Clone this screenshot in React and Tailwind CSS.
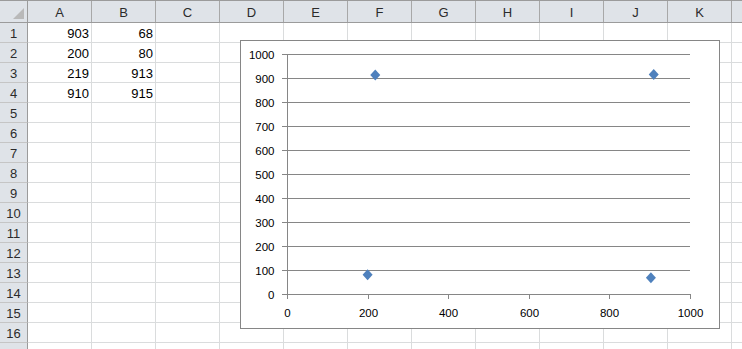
import React from "react";

const cols = ["A", "B", "C", "D", "E", "F", "G", "H", "I", "J", "K", ""];
const data = {
  1: ["903", "68"],
  2: ["200", "80"],
  3: ["219", "913"],
  4: ["910", "915"],
};
const rows = Array.from({ length: 17 }, (_, i) => i + 1);

const OX = 241;
const OY = 41;
const X0 = 287;
const Y0 = 294;
const sx = (v) => X0 + (v * 403) / 1000 - OX;
const sy = (v) => Y0 - (v * 240) / 1000 - OY;

const points = [
  [903, 68],
  [200, 80],
  [219, 913],
  [910, 915],
];

function Chart() {
  const grid = [];
  for (let k = 1; k <= 10; k++) {
    const y = Math.round(sy(k * 100)) + 0.5;
    grid.push(
      <line key={"g" + k} x1={X0 - OX} x2={690 - OX} y1={y} y2={y} stroke="#868686" strokeWidth="1" />
    );
  }
  const yticks = [];
  const ylabels = [];
  for (let k = 0; k <= 10; k++) {
    const y = Math.round(sy(k * 100)) + 0.5;
    yticks.push(
      <line key={"yt" + k} x1={282 - OX} x2={X0 - OX} y1={y} y2={y} stroke="#868686" strokeWidth="1" />
    );
    ylabels.push(
      <text key={"yl" + k} x={274.5 - OX} y={y + 4} textAnchor="end" fontSize="11.5" fill="#000">
        {k * 100}
      </text>
    );
  }
  const xticks = [];
  const xlabels = [];
  for (let k = 0; k <= 5; k++) {
    const x = Math.round(sx(k * 200)) + 0.5;
    xticks.push(
      <line key={"xt" + k} x1={x} x2={x} y1={Y0 - OY} y2={Y0 - OY + 5} stroke="#868686" strokeWidth="1" />
    );
    xlabels.push(
      <text key={"xl" + k} x={x} y={317 - OY} textAnchor="middle" fontSize="11.5" fill="#000">
        {k * 200}
      </text>
    );
  }
  return (
    <svg width="478" height="287" className="block" style={{ fontFamily: '"Liberation Sans", Arial, sans-serif' }}>
      {grid}
      <line x1={X0 - OX + 0.5} x2={X0 - OX + 0.5} y1={Math.round(sy(1000))} y2={Y0 - OY + 1} stroke="#868686" strokeWidth="1" />
      <line x1={X0 - OX} x2={690 - OX + 1} y1={Y0 - OY + 0.5} y2={Y0 - OY + 0.5} stroke="#868686" strokeWidth="1" />
      {yticks}
      {xticks}
      {ylabels}
      {xlabels}
      {points.map(([px, py], i) => {
        const cx = sx(px);
        const cy = sy(py);
        return (
          <polygon
            key={i}
            points={`${cx},${cy - 5.5} ${cx + 5},${cy} ${cx},${cy + 5.5} ${cx - 5},${cy}`}
            fill="#4F81BD"
          />
        );
      })}
    </svg>
  );
}

export default function App() {
  return (
    <div
      className="relative w-[742px] h-[349px] overflow-hidden bg-white text-[13px]"
      style={{ fontFamily: '"Liberation Sans", Arial, sans-serif' }}
    >
      {/* header row */}
      <div className="flex h-[23px] border-t border-b border-[#9b9b9b] bg-[#dfe3e8]">
        <div className="relative w-[28px] shrink-0 border-r border-[#9b9b9b]">
          <div className="absolute right-[3px] bottom-[3px] w-0 h-0 border-l-[11px] border-l-transparent border-b-[11px] border-b-[#b9b9b9]" />
        </div>
        {cols.map((c, i) => (
          <div
            key={i}
            className="w-[64px] shrink-0 border-r border-[#a8a8a8] flex items-center justify-center pt-[2px] text-[#2b2b2b]"
          >
            {c}
          </div>
        ))}
      </div>
      {rows.map((r) => (
        <div key={r} className="flex h-[20px]">
          <div className="w-[28px] shrink-0 bg-[#dfe3e8] border-r border-b border-r-[#9b9b9b] border-b-[#c5c5c5] flex items-center justify-center pt-[2px] text-[#2b2b2b]">
            {r <= 16 ? r : ""}
          </div>
          {cols.map((c, i) => (
            <div
              key={i}
              className="w-[64px] shrink-0 border-r border-b border-[#dadcdd] flex items-center justify-end pr-[2px] pt-[2px] text-black"
            >
              {data[r] && i < 2 ? data[r][i] : ""}
            </div>
          ))}
        </div>
      ))}
      <div className="absolute left-[240px] top-[40px] w-[480px] h-[289px] border border-[#868686] bg-white">
        <Chart />
      </div>
    </div>
  );
}
